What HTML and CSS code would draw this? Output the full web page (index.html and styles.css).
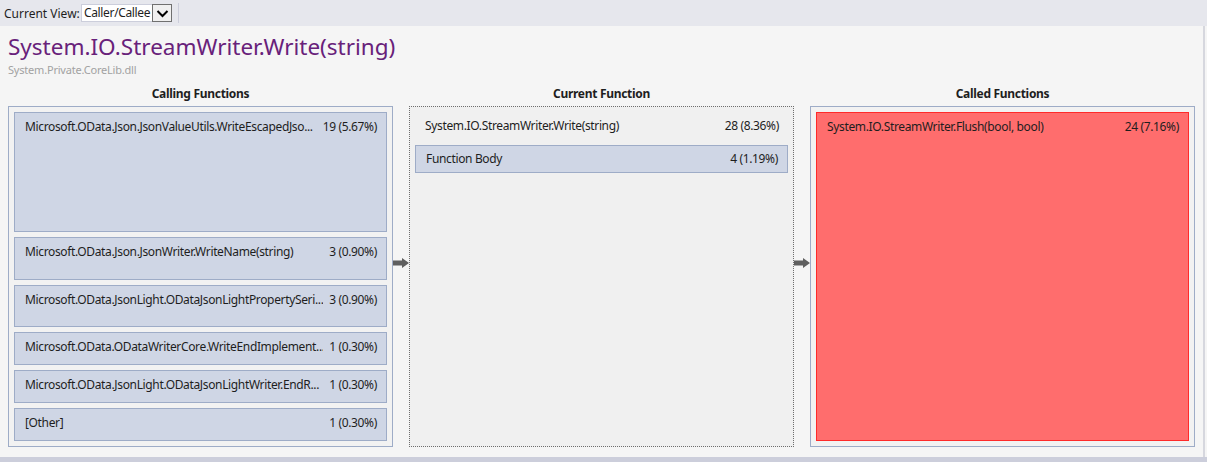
FILE: index.html
```html
<!DOCTYPE html>
<html>
<head>
<meta charset="utf-8">
<link rel="stylesheet" href="styles.css">
</head>
<body>
<div class="toolbar">
  <span class="tb-label">Current View:</span>
  <div class="select">
    <span class="select-text">Caller/Callee</span>
    <span class="select-btn"><svg width="13" height="9" viewBox="0 0 13 9"><path d="M1.5 2 L6.5 7 L11.5 2" fill="none" stroke="#000" stroke-width="2"/></svg></span>
  </div>
  <span class="tb-sep"></span>
</div>
<div class="main">
  <h1 class="title">System.IO.StreamWriter.Write(string)</h1>
  <div class="subtitle">System.Private.CoreLib.dll</div>
  <div class="grid">
    <div class="col-head">Calling Functions</div>
    <div></div>
    <div class="col-head">Current Function</div>
    <div></div>
    <div class="col-head">Called Functions</div>

    <div class="panel">
      <div class="item" style="height: 120px"><span class="name">Microsoft.OData.Json.JsonValueUtils.WriteEscapedJso...</span><span class="num">19 (5.67%)</span></div>
      <div class="item" style="height: 43px"><span class="name">Microsoft.OData.Json.JsonWriter.WriteName(string)</span><span class="num">3 (0.90%)</span></div>
      <div class="item" style="height: 42px"><span class="name">Microsoft.OData.JsonLight.ODataJsonLightPropertySeri...</span><span class="num">3 (0.90%)</span></div>
      <div class="item" style="height: 33px"><span class="name">Microsoft.OData.ODataWriterCore.WriteEndImplement...</span><span class="num">1 (0.30%)</span></div>
      <div class="item" style="height: 33px"><span class="name">Microsoft.OData.JsonLight.ODataJsonLightWriter.EndR...</span><span class="num">1 (0.30%)</span></div>
      <div class="item" style="height: 33px"><span class="name">[Other]</span><span class="num">1 (0.30%)</span></div>
    </div>
    <div class="arrow-col"><svg width="16" height="10" viewBox="0 0 16 10"><path d="M0 2.5 H9 V0 L16 5 L9 10 V7.5 H0 Z" fill="#5f5f5f"/></svg></div>
    <div class="panel current">
      <div class="cur-row"><span class="name">System.IO.StreamWriter.Write(string)</span><span class="num">28 (8.36%)</span></div>
      <div class="item body-item"><span class="name">Function Body</span><span class="num">4 (1.19%)</span></div>
    </div>
    <div class="arrow-col"><svg width="16" height="10" viewBox="0 0 16 10"><path d="M0 2.5 H9 V0 L16 5 L9 10 V7.5 H0 Z" fill="#5f5f5f"/></svg></div>
    <div class="panel">
      <div class="item hot"><span class="name">System.IO.StreamWriter.Flush(bool, bool)</span><span class="num">24 (7.16%)</span></div>
    </div>
  </div>
</div>
<div class="bottom-bar"></div>
</body>
</html>
```

FILE: styles.css
```css
html, body {
  margin: 0;
  padding: 0;
}
body {
  width: 1207px;
  height: 462px;
  overflow: hidden;
  font-family: "Noto Sans", "Open Sans", sans-serif;
  font-size: 12px;
  letter-spacing: -0.35px;
  color: #1e1e1e;
  background: #f5f5f5;
  display: flex;
  flex-direction: column;
}
.toolbar {
  height: 26px;
  flex: none;
  background: #e6e7ed;
  display: flex;
  align-items: center;
  padding-left: 4px;
  box-sizing: border-box;
}
.tb-label {
  font-size: 12px;
  color: #1e1e1e;
  width: 77px;
  letter-spacing: 0;
}
.select {
  width: 91px;
  height: 18px;
  background: #fff;
  border: 1px solid #cccedb;
  box-sizing: border-box;
  display: flex;
  align-items: stretch;
}
.select-text {
  flex: 1;
  font-size: 12px;
  line-height: 16px;
  padding-left: 2px;
  color: #1e1e1e;
  overflow: hidden;
  white-space: nowrap;
}
.select-btn {
  width: 20px;
  border: 1px solid #707070;
  margin: -1px -1px -1px 0;
  box-sizing: border-box;
  background: #f0f0f0;
  display: flex;
  align-items: center;
  justify-content: center;
}
.tb-sep {
  width: 1px;
  height: 20px;
  background: #cccedb;
  margin-left: 6px;
}
.main {
  flex: 1;
  padding: 0 8px;
  border-right: 2px solid #d6d7de;
  width: 1205px;
  box-sizing: border-box;
}
.title {
  margin: 7px 0 0 0;
  font-weight: normal;
  font-size: 22.5px;
  line-height: 28px;
  color: #68217a;
  letter-spacing: 0;
}
.subtitle {
  font-size: 11px;
  line-height: 14px;
  color: #a2a2a2;
  margin-top: 2px;
  letter-spacing: -0.2px;
}
.grid {
  margin-top: 9px;
  display: grid;
  grid-template-columns: 385px 16px 385px 16px 385px;
  grid-template-rows: 20px 341px;
}
.col-head {
  text-align: center;
  font-weight: bold;
  font-size: 12px;
  line-height: 16px;
  color: #1e1e1e;
  letter-spacing: -0.3px;
}
.panel {
  border: 1px solid #9eacc7;
  padding: 5px;
  display: flex;
  flex-direction: column;
  gap: 5px;
  background: #f2f2f2;
  box-sizing: border-box;
  min-height: 0;
}
.panel.current {
  border: 1px dotted #6e6e6e;
  background: #f0f0f0;
  gap: 0;
}
.item {
  flex: none;
  background: #cfd6e5;
  border: 1px solid #9eacc7;
  display: flex;
  justify-content: space-between;
  align-items: flex-start;
  padding: 6px 9px 0 10px;
  box-sizing: border-box;
  line-height: 16px;
  gap: 6px;
}
.name {
  flex: 1;
  min-width: 0;
  white-space: nowrap;
  overflow: hidden;
}
.num {
  flex: none;
  white-space: nowrap;
}
.cur-row {
  display: flex;
  justify-content: space-between;
  padding: 6px 9px 0 10px;
  height: 33px;
  box-sizing: border-box;
  line-height: 16px;
  flex: none;
}
.body-item {
  height: 28px;
  padding-top: 5px;
}
.item.hot {
  flex: 1;
  background: #ff6d6d;
  border: 1px solid #ff2a2a;
}
.arrow-col {
  display: flex;
  align-items: flex-start;
  padding-top: 152px;
}
.arrow-col svg {
  display: block;
}
.bottom-bar {
  height: 5px;
  flex: none;
  background: #cccedb;
}
```
